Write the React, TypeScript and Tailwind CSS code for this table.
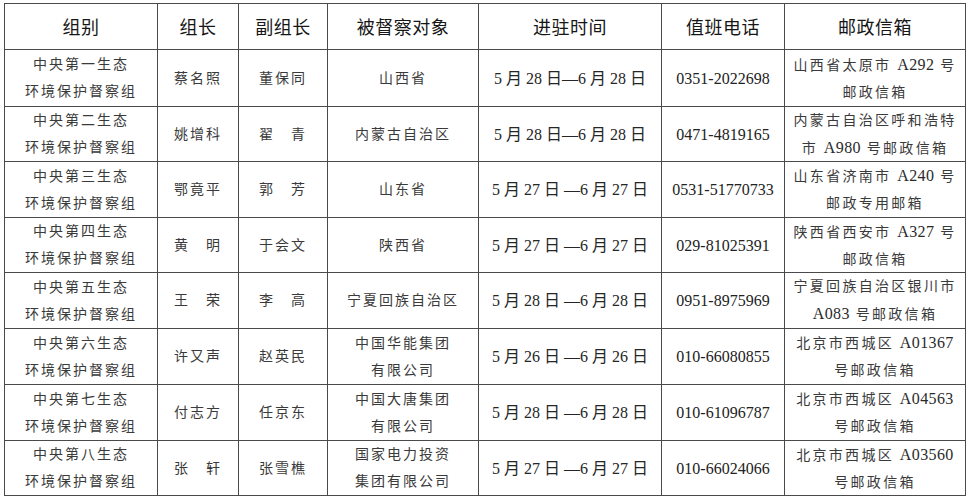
import React from "react";

type Row = {
  group: string;
  leader: string;
  deputy: string;
  target: string[];
  date: string;
  phone: string;
  mail: string[];
  h: string;
};

const rows: Row[] = [
  { group: "一", leader: "蔡名照", deputy: "董保同", target: ["山西省"], date: "5 月 28 日—6 月 28 日", phone: "0351-2022698", mail: ["山西省太原市 A292 号", "邮政信箱"], h: "h-[57px]" },
  { group: "二", leader: "姚增科", deputy: "翟　青", target: ["内蒙古自治区"], date: "5 月 28 日—6 月 28 日", phone: "0471-4819165", mail: ["内蒙古自治区呼和浩特", "市 A980 号邮政信箱"], h: "h-[55px]" },
  { group: "三", leader: "鄂竟平", deputy: "郭　芳", target: ["山东省"], date: "5 月 27 日 —6 月 27 日", phone: "0531-51770733", mail: ["山东省济南市 A240 号", "邮政专用邮箱"], h: "h-[56px]" },
  { group: "四", leader: "黄　明", deputy: "于会文", target: ["陕西省"], date: "5 月 27 日 —6 月 27 日", phone: "029-81025391", mail: ["陕西省西安市 A327 号", "邮政信箱"], h: "h-[55px]" },
  { group: "五", leader: "王　荣", deputy: "李　高", target: ["宁夏回族自治区"], date: "5 月 28 日 —6 月 28 日", phone: "0951-8975969", mail: ["宁夏回族自治区银川市", "A083 号邮政信箱"], h: "h-[56px]" },
  { group: "六", leader: "许又声", deputy: "赵英民", target: ["中国华能集团", "有限公司"], date: "5 月 26 日 —6 月 26 日", phone: "010-66080855", mail: ["北京市西城区 A01367", "号邮政信箱"], h: "h-[56px]" },
  { group: "七", leader: "付志方", deputy: "任京东", target: ["中国大唐集团", "有限公司"], date: "5 月 28 日 —6 月 28 日", phone: "010-61096787", mail: ["北京市西城区 A04563", "号邮政信箱"], h: "h-[56px]" },
  { group: "八", leader: "张　轩", deputy: "张雪樵", target: ["国家电力投资", "集团有限公司"], date: "5 月 27 日 —6 月 27 日", phone: "010-66024066", mail: ["北京市西城区 A03560", "号邮政信箱"], h: "h-[55px]" },
];

const headers = ["组别", "组长", "副组长", "被督察对象", "进驻时间", "值班电话", "邮政信箱"];
const widths = ["w-[153px]", "w-[81px]", "w-[89px]", "w-[151px]", "w-[183px]", "w-[123px]", "w-[181px]"];

const serif = "font-['Liberation_Serif','Noto_Sans_CJK_SC',serif]";

function Cell({ w, children, className = "" }: { w: string; children: React.ReactNode; className?: string }) {
  return (
    <div className={`${w} shrink-0 border-r border-[#4a4a4a] flex flex-col items-center justify-center text-center ${className}`}>
      {children}
    </div>
  );
}

function MailLine({ text }: { text: string }) {
  const parts = text.split(/([A-Z0-9]+)/).filter((p) => p.length > 0);
  return (
    <span className="whitespace-nowrap">
      {parts.map((p, i) =>
        /^[A-Z0-9]+$/.test(p) ? (
          <span key={i} className="text-[16px] tracking-[0.4px] text-[#2a2a2a]">
            {p}
          </span>
        ) : (
          <span key={i}>{p}</span>
        )
      )}
    </span>
  );
}

export default function App() {
  return (
    <div className="w-[970px] h-[500px] bg-white overflow-hidden">
      <div className="ml-[4px] mt-[3px] w-[962px] border-l border-t border-[#4a4a4a]">
        <div className="flex h-[46px] border-b border-[#4a4a4a] font-['Noto_Sans_CJK_SC',sans-serif] text-[18px] text-[#161616]">
          {headers.map((h, i) => (
            <Cell key={h} w={widths[i]}>
              <span className="tracking-[0.5px]">{h}</span>
            </Cell>
          ))}
        </div>
        {rows.map((r) => (
          <div key={r.group} className={`flex ${r.h} border-b border-[#4a4a4a] ${serif} text-[14px] text-[#3a3a3a] leading-[27px]`}>
            <Cell w={widths[0]} className="tracking-[2px]">
              <span>中央第{r.group}生态</span>
              <span>环境保护督察组</span>
            </Cell>
            <Cell w={widths[1]} className="tracking-[2px]">
              <span>{r.leader}</span>
            </Cell>
            <Cell w={widths[2]} className="tracking-[2px]">
              <span>{r.deputy}</span>
            </Cell>
            <Cell w={widths[3]} className="tracking-[2px]">
              {r.target.map((t) => (
                <span key={t}>{t}</span>
              ))}
            </Cell>
            <Cell w={widths[4]} className="text-[16px] text-[#262626]">
              <span className="whitespace-nowrap">{r.date}</span>
            </Cell>
            <Cell w={widths[5]} className="text-[16px] text-[#222]">
              <span>{r.phone}</span>
            </Cell>
            <Cell w={widths[6]} className="tracking-[2.3px] text-[14px]">
              {r.mail.map((m) => (
                <MailLine key={m} text={m} />
              ))}
            </Cell>
          </div>
        ))}
      </div>
    </div>
  );
}
